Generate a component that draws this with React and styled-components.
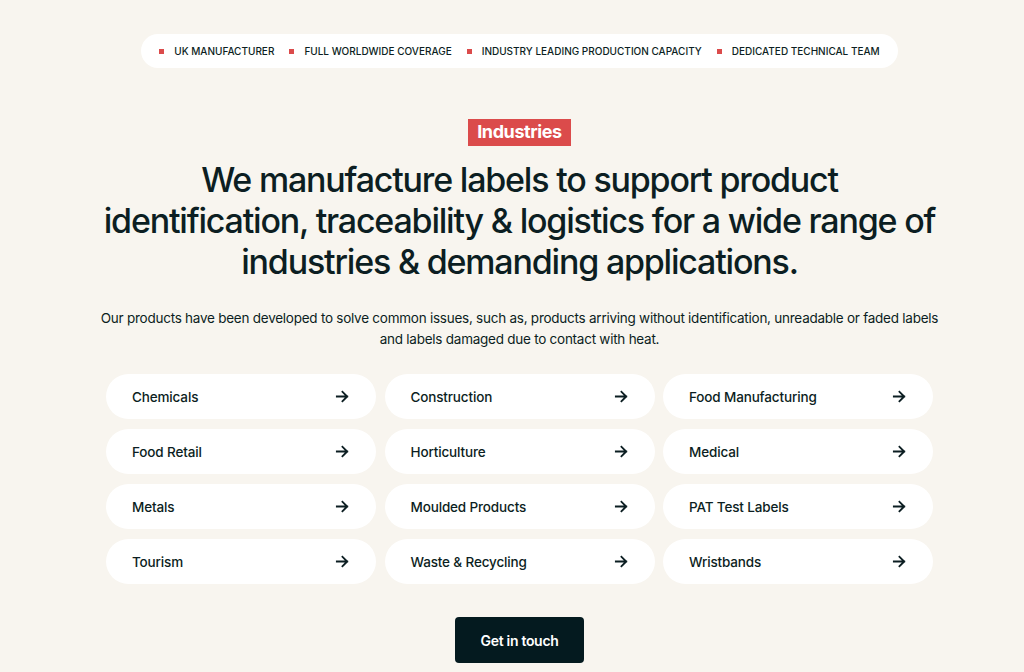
import React from "react";
import styled, { createGlobalStyle } from "styled-components";

const GlobalStyle = createGlobalStyle`
  body {
    margin: 0;
    background: #f8f5ef;
    font-family: "Inter", "Liberation Sans", sans-serif;
    color: #0c1e22;
  }
`;

const StPage = styled.main`
  min-height: 672px;
  padding: 34px 0 0 15px;
  display: flex;
  flex-direction: column;
  align-items: center;
  box-sizing: border-box;
`;

const StTicker = styled.ul`
  list-style: none;
  margin: 0;
  height: 34px;
  padding: 0 18px;
  background: #fff;
  border-radius: 17px;
  display: flex;
  align-items: center;
  gap: 15px;
`;

const StTickerItem = styled.li`
  display: flex;
  align-items: center;
  gap: 10px;
  font-size: 10px;
  font-weight: 500;
  text-transform: uppercase;
  &::before {
    content: "";
    width: 5px;
    height: 5px;
    background: #db4b4b;
  }
`;

const StBadge = styled.span`
  margin-top: 51px;
  background: #db4b4b;
  color: #fff;
  font-size: 18px;
  font-weight: 700;
  letter-spacing: -0.4px;
  padding: 2px 9px 3px;
  line-height: 22px;
`;

const StTitle = styled.h1`
  margin: 13px 0 0;
  width: 842px;
  text-align: center;
  font-size: 34px;
  font-weight: 500;
  line-height: 41px;
  letter-spacing: -1.2px;
`;

const StLead = styled.p`
  margin: 26px 0 0;
  width: 850px;
  text-align: center;
  font-size: 13.5px;
  line-height: 21px;
  letter-spacing: -0.25px;
`;

const StGrid = styled.div`
  margin-top: 24px;
  display: grid;
  grid-template-columns: repeat(3, 270px);
  gap: 10px 8.5px;
`;

const StCard = styled.a`
  height: 45px;
  background: #fff;
  border-radius: 23px;
  padding: 0 26px;
  display: flex;
  align-items: center;
  justify-content: space-between;
  font-size: 13.5px;
  font-weight: 500;
  letter-spacing: -0.15px;
  color: #0c1e22;
  text-decoration: none;
  svg {
    width: 15px;
    height: 15px;
  }
`;

const StButton = styled.button`
  margin-top: 33px;
  width: 129px;
  height: 46px;
  border: 0;
  border-radius: 4px;
  background: #041a1f;
  color: #fff;
  font-family: inherit;
  font-size: 14px;
  font-weight: 600;
  letter-spacing: -0.3px;
`;

const ticker = [
  "UK Manufacturer",
  "Full Worldwide Coverage",
  "Industry Leading Production Capacity",
  "Dedicated Technical Team",
];

const industries = [
  "Chemicals",
  "Construction",
  "Food Manufacturing",
  "Food Retail",
  "Horticulture",
  "Medical",
  "Metals",
  "Moulded Products",
  "PAT Test Labels",
  "Tourism",
  "Waste & Recycling",
  "Wristbands",
];

function Arrow() {
  return (
    <svg viewBox="0 0 16 16" fill="none" stroke="#0c1e22" strokeWidth="2" strokeLinecap="square">
      <path d="M2 8h11M8 3l5 5-5 5" />
    </svg>
  );
}

export default function App() {
  return (
    <>
      <GlobalStyle />
      <StPage>
        <StTicker>
          {ticker.map((t) => (
            <StTickerItem key={t}>{t}</StTickerItem>
          ))}
        </StTicker>
        <StBadge>Industries</StBadge>
        <StTitle>
          We manufacture labels to support product identification, traceability &amp; logistics for a wide range of
          industries &amp; demanding applications.
        </StTitle>
        <StLead>
          Our products have been developed to solve common issues, such as, products arriving without identification,
          unreadable or faded labels and labels damaged due to contact with heat.
        </StLead>
        <StGrid>
          {industries.map((name) => (
            <StCard href="#" key={name}>
              {name}
              <Arrow />
            </StCard>
          ))}
        </StGrid>
        <StButton>Get in touch</StButton>
      </StPage>
    </>
  );
}
